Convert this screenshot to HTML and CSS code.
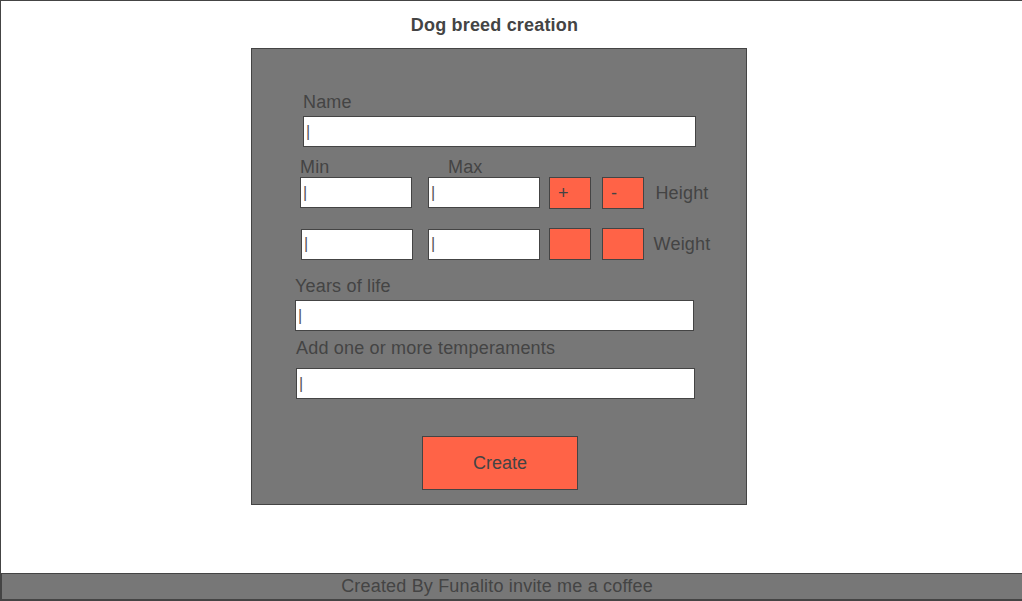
FILE: index.html
```html
<!DOCTYPE html>
<html lang="en">
<head>
<meta charset="utf-8">
<title>Dog breed creation</title>
<link rel="stylesheet" href="styles.css">
</head>
<body>
<div class="page">
  <main class="main">
    <h1 class="title">Dog breed creation</h1>
    <form class="card">
      <div class="field field-name">
        <label class="label label-tight">Name</label>
        <input class="input input-name" type="text" placeholder="|">
      </div>
      <div class="measures">
        <div class="measure-labels">
          <span class="ml-min">Min</span>
          <span class="ml-max">Max</span>
        </div>
        <div class="measure-row measure-row-height">
          <input class="input input-small" type="text" placeholder="|">
          <input class="input input-small input-max" type="text" placeholder="|">
          <button class="btn-small btn-plus" type="button">+</button>
          <button class="btn-small btn-minus" type="button">-</button>
          <span class="measure-name">Height</span>
        </div>
        <div class="measure-row measure-row-weight">
          <input class="input input-small input-min-weight" type="text" placeholder="|">
          <input class="input input-small input-max-weight" type="text" placeholder="|">
          <button class="btn-small btn-plus" type="button"></button>
          <button class="btn-small btn-minus" type="button"></button>
          <span class="measure-name">Weight</span>
        </div>
      </div>
      <div class="field field-years">
        <label class="label label-tight">Years of life</label>
        <input class="input input-long" type="text" placeholder="|">
      </div>
      <div class="field field-temp">
        <label class="label label-temp">Add one or more temperaments</label>
        <input class="input input-long" type="text" placeholder="|">
      </div>
      <button class="create" type="button">Create</button>
    </form>
  </main>
  <footer class="footer">Created By Funalito invite me a coffee</footer>
</div>
</body>
</html>
```

FILE: styles.css
```css
* {
  box-sizing: border-box;
}

html, body {
  margin: 0;
  padding: 0;
}

body {
  font-family: "Liberation Sans", Arial, sans-serif;
  color: #444;
  background: #fff;
  letter-spacing: 0.18px;
}

.page {
  min-height: 100vh;
  display: flex;
  flex-direction: column;
  border: 1px solid #444;
  border-right: none;
}

.main {
  width: 996px;
  display: flex;
  flex-direction: column;
  align-items: center;
}

.title {
  margin: 14px 9px 12px 0;
  font-size: 18px;
  line-height: 21px;
  font-weight: bold;
  color: #444;
}

.card {
  width: 496px;
  background: #777;
  border: 1px solid #444;
  padding: 43px 0 14px;
  display: flex;
  flex-direction: column;
}

.label {
  display: block;
  font-size: 18px;
  line-height: 21px;
  color: #444;
}

.label-tight {
  margin-bottom: 3px;
}

.label-temp {
  margin-bottom: 9px;
}

.input {
  display: block;
  height: 31px;
  margin: 0;
  border: 1px solid #444;
  border-radius: 0;
  padding: 1px 2px;
  font-family: "Liberation Sans", Arial, sans-serif;
  font-size: 16px;
  letter-spacing: 0;
  color: #444;
  background: #fff;
  outline: none;
}

.input::placeholder {
  color: #555;
  opacity: 1;
}

.field-name {
  margin-left: 51px;
}

.input-name {
  width: 393px;
}

.measures {
  margin: 10px 0 0 48px;
}

.measure-labels {
  display: flex;
  font-size: 18px;
  line-height: 20px;
}

.ml-min {
  width: 148px;
}

.measure-row {
  display: flex;
  align-items: center;
  height: 32px;
}

.measure-row-height {
  align-items: flex-start;
}

.measure-row-weight {
  margin-top: 19px;
}

.input-small {
  width: 112px;
}

.input-max {
  margin-left: 16px;
}

.input-min-weight {
  margin-left: 1px;
}

.input-max-weight {
  margin-left: 15px;
}

.btn-small {
  width: 42px;
  height: 32px;
  margin: 0;
  padding: 0 0 0 8px;
  text-align: left;
  border: 1px solid #444;
  border-radius: 0;
  background: #ff6347;
  font-family: "Liberation Sans", Arial, sans-serif;
  font-size: 18px;
  color: #444;
}

.btn-plus {
  margin-left: 9px;
}

.btn-minus {
  margin-left: 11px;
}

.measure-name {
  align-self: center;
  width: 76px;
  text-align: center;
  font-size: 18px;
  line-height: 21px;
}

.field-years {
  margin: 16px 0 0 43px;
}

.field-temp {
  margin: 7px 0 0 44px;
}

.input-long {
  width: 399px;
}

.create {
  align-self: flex-start;
  margin: 37px 0 0 170px;
  width: 156px;
  height: 54px;
  padding: 0;
  border: 1px solid #444;
  border-radius: 0;
  background: #ff6347;
  font-family: "Liberation Sans", Arial, sans-serif;
  font-size: 18px;
  color: #444;
}

.footer {
  margin-top: auto;
  border: 1px solid #444;
  border-right: none;
  background: #777;
  font-size: 18px;
  line-height: 25px;
  text-align: center;
  padding-right: 30px;
  color: #444;
}
```
